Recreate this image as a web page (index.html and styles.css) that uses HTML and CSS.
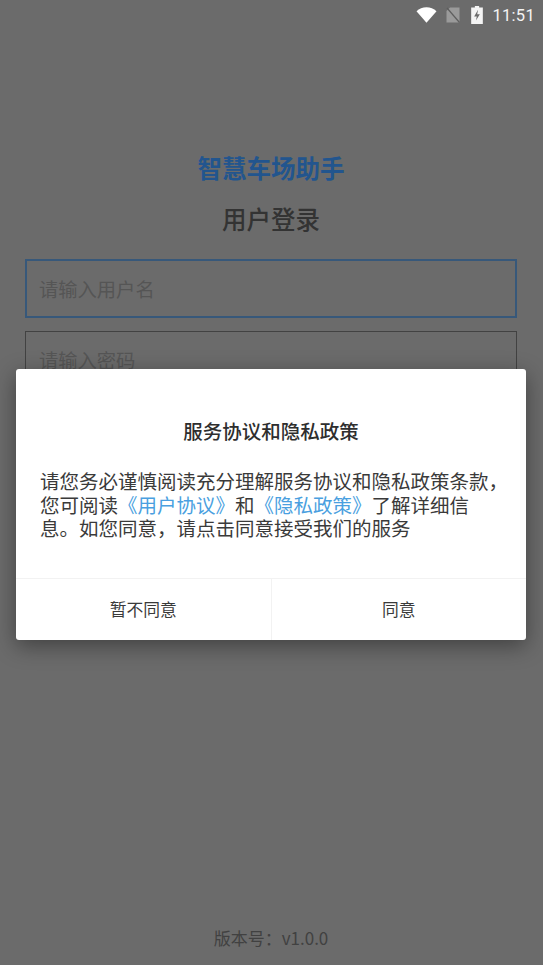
FILE: index.html
```html
<!DOCTYPE html>
<html lang="zh">
<head>
<meta charset="utf-8">
<title>智慧车场助手</title>
<link rel="stylesheet" href="styles.css">
</head>
<body>
<div class="page">
  <header class="status">
    <svg class="wifi" viewBox="0 0 22 16"><path d="M0.5 4.2C3.4 1.6 7 0 11 0s7.6 1.6 10.5 4.2L11 16z"/></svg>
    <svg class="sim" viewBox="0 0 14 16"><path class="sim-body" d="M4 0.5h9.5v15H0.5V4z"/><path class="sim-slash" d="M1 1l12.5 14.5"/></svg>
    <svg class="batt" viewBox="0 0 11 17"><path d="M3.5 0h4v1.5H11V17H0V1.500h3.500z"/><path class="bolt" d="M6.500 3.500L2.800 9.800h2.500l-.8 4 3.700-6.100H5.700z"/></svg>
    <span class="time">11:51</span>
  </header>
  <main class="login">
    <h1 class="brand">智慧车场助手</h1>
    <h2 class="heading">用户登录</h2>
    <div class="field field-active">请输入用户名</div>
    <div class="field">请输入密码</div>
    <p class="version">版本号：v1.0.0</p>
  </main>
  <div class="overlay">
    <section class="dialog">
      <h3 class="dialog-title">服务协议和隐私政策</h3>
      <p class="dialog-text">请您务必谨慎阅读充分理解服务协议和隐私政策条款，<br>您可阅读<a class="link">《用户协议》</a>和<a class="link">《隐私政策》</a>了解详细信<br>息。如您同意，请点击同意接受我们的服务</p>
      <div class="actions">
        <div class="action">暂不同意</div>
        <div class="action">同意</div>
      </div>
    </section>
  </div>
</div>
</body>
</html>
```
FILE: styles.css
```css
* { box-sizing: border-box; }
html, body { margin: 0; padding: 0; }
body { font-family: "Noto Sans CJK SC", "Roboto", sans-serif; background: #6b6b6b; text-spacing-trim: space-all; }
.page { position: relative; width: 543px; height: 965px; overflow: hidden; display: flex; flex-direction: column; background: #6b6b6b; }
.status { position: relative; z-index: 2; height: 30px; display: flex; align-items: center; justify-content: flex-end; padding-right: 8px; flex: none; }
.wifi { width: 21px; height: 16px; fill: #fff; margin-right: 9px; }
.sim { width: 14px; height: 16px; margin-right: 11px; }
.sim-body { fill: #9a9a9a; }
.sim-slash { stroke: #5e5e5e; stroke-width: 1.2; fill: none; }
.batt { width: 12px; height: 18px; fill: #f4f4f4; margin-right: 9px; }
.bolt { fill: #6b6b6b; }
.time { font-family: Roboto, sans-serif; font-size: 16.5px; color: #f4f4f4; letter-spacing: .3px; }
.login { flex: 1; display: flex; flex-direction: column; padding: 0 26px 0 25px; }
.brand { margin: 120px 0 0; text-align: center; font-size: 24.5px; line-height: 36px; font-weight: 700; color: #22558e; }
.heading { margin: 15px 0 0; text-align: center; font-size: 24.5px; line-height: 36px; font-weight: 500; color: #333; }
.field { height: 59px; margin-top: 13px; padding-left: 13px; border: 1px solid #424242; font-size: 19.3px; line-height: 57px; color: #555; }
.field-active { margin-top: 22px; border: 2px solid #37587a; line-height: 57px; padding-left: 12px; }
.version { margin: auto 0 15px; text-align: center; font-size: 17px; line-height: 24px; color: #414141; }
.overlay { position: absolute; inset: 0; z-index: 1; display: flex; justify-content: flex-start; padding: 369px 0 0 16px; }
.dialog { width: 510px; height: 271px; background: #fff; border-radius: 3px; box-shadow: 0 6px 22px rgba(0,0,0,.4); display: flex; flex-direction: column; }
.dialog-title { margin: 47px 0 0; text-align: center; font-size: 19.5px; line-height: 29px; font-weight: 500; color: #2e2e2e; }
.dialog-text { margin: 24px 0 0; padding: 0 24px; font-size: 19.5px; line-height: 23.5px; color: #3a3a3a; white-space: nowrap; }
.link { color: #4a9fe0; }
.actions { margin-top: auto; height: 62px; display: flex; border-top: 1px solid #f2f2f2; }
.action { flex: 1; text-align: center; line-height: 60px; font-size: 16.8px; color: #3a3a3a; }
.action + .action { border-left: 1px solid #f2f2f2; }
```
